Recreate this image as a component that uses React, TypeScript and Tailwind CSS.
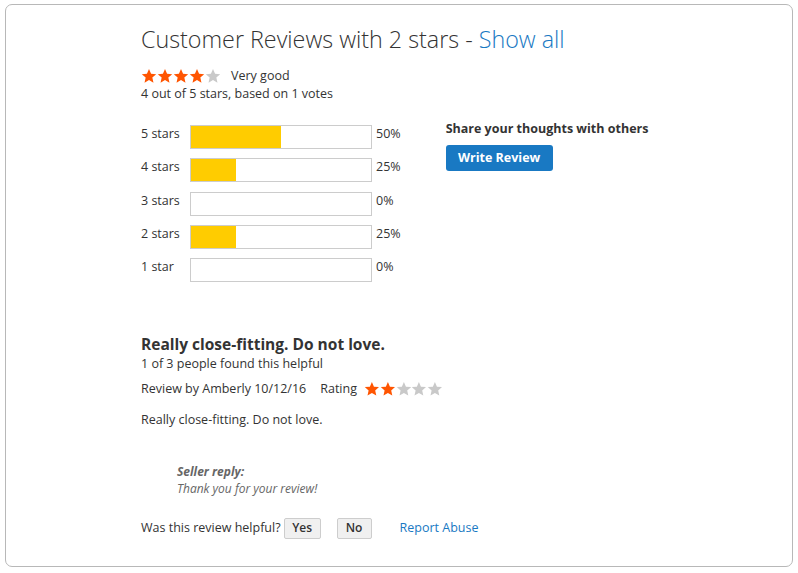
import React from 'react';

const ORANGE = '#ff5501';
const GREY = '#c9c9c9';

const Star = ({ filled, size = 16 }: { filled: boolean; size?: number }) => (
    <svg width={size} height={size} viewBox="0 0 24 24" className="block">
        <path
            d="M12 1.5l3.1 7.1 7.7.7-5.8 5.1 1.7 7.6L12 18.1 5.3 22l1.7-7.6-5.8-5.1 7.7-.7z"
            fill={filled ? ORANGE : GREY}
        />
    </svg>
);

const Stars = ({ value, size }: { value: number; size?: number }) => (
    <div className="flex items-center">
        {[1, 2, 3, 4, 5].map((i) => (
            <Star key={i} filled={i <= value} size={size} />
        ))}
    </div>
);

const bars = [
    { label: '5 stars', pct: 50 },
    { label: '4 stars', pct: 25 },
    { label: '3 stars', pct: 0 },
    { label: '2 stars', pct: 25 },
    { label: '1 star', pct: 0 },
];

export default function App() {
    return (
        <div
            className="w-[798px] h-[573px] bg-white pt-[4px] pl-[5px] pr-[5px] pb-[6px] text-[#333] text-[12.5px]"
            style={{ fontFamily: '"Open Sans", "Liberation Sans", sans-serif' }}
        >
            <div className="h-full rounded-[7px] border border-[#b8b8b8] pl-[135px] pt-[20px]">
                <h1 className="text-[23.3px] font-light leading-[28px] text-[#333]">
                    Customer Reviews with 2 stars - <a className="text-[#1979c3]">Show all</a>
                </h1>

                <div className="mt-[15px] flex items-center h-[16px]">
                    <Stars value={4} />
                    <span className="ml-[10px] leading-[16px]">Very good</span>
                </div>
                <p className="leading-[18px] mt-[1px]">4 out of 5 stars, based on 1 votes</p>

                <div className="mt-[22px] flex">
                    <div className="flex flex-col gap-[9.33px]">
                        {bars.map((b) => (
                            <div key={b.label} className="flex items-center h-[24px]">
                                <span className="w-[49px] leading-[18px] -mt-[6px]">{b.label}</span>
                                <div className="w-[182px] h-[24px] border border-[#cccccc] bg-white">
                                    <div className="h-full bg-[#ffcc00]" style={{ width: `${b.pct}%` }} />
                                </div>
                                <span className="ml-[4px] leading-[18px] -mt-[6px]">{b.pct}%</span>
                            </div>
                        ))}
                    </div>
                    <div className="ml-[45px] -mt-[5px]">
                        <p className="font-bold leading-[18px]">Share your thoughts with others</p>
                        <button className="mt-[7px] h-[26px] w-[107px] rounded-[3px] bg-[#1979c3] text-white font-bold text-[12.5px]">
                            Write Review
                        </button>
                    </div>
                </div>

                <h2 className="mt-[51px] text-[15.5px] font-bold leading-[22px]">Really close-fitting. Do not love.</h2>
                <p className="leading-[17px]">1 of 3 people found this helpful</p>
                <div className="mt-[8px] flex items-center h-[18px]">
                    <span>Review by Amberly 10/12/16</span>
                    <span className="ml-[14px] mr-[7px]">Rating</span>
                    <Stars value={2} size={15.8} />
                </div>
                <p className="mt-[13px] leading-[18px]">Really close-fitting. Do not love.</p>

                <div className="mt-[34px] ml-[36px] text-[12px] italic text-[#666] leading-[17px]">
                    <p className="font-bold">Seller reply:</p>
                    <p>Thank you for your review!</p>
                </div>

                <div className="mt-[20px] flex items-center h-[22px]">
                    <span>Was this review helpful?</span>
                    <button className="ml-[3px] h-[21px] w-[37px] rounded-[2px] border border-[#cdcdcd] bg-[#f0f0f0] text-[12px] font-semibold">
                        Yes
                    </button>
                    <button className="ml-[16px] h-[21px] w-[35px] rounded-[2px] border border-[#cdcdcd] bg-[#f0f0f0] text-[12px] font-semibold">
                        No
                    </button>
                    <a className="ml-[28px] text-[#1979c3]">Report Abuse</a>
                </div>
            </div>
        </div>
    );
}
